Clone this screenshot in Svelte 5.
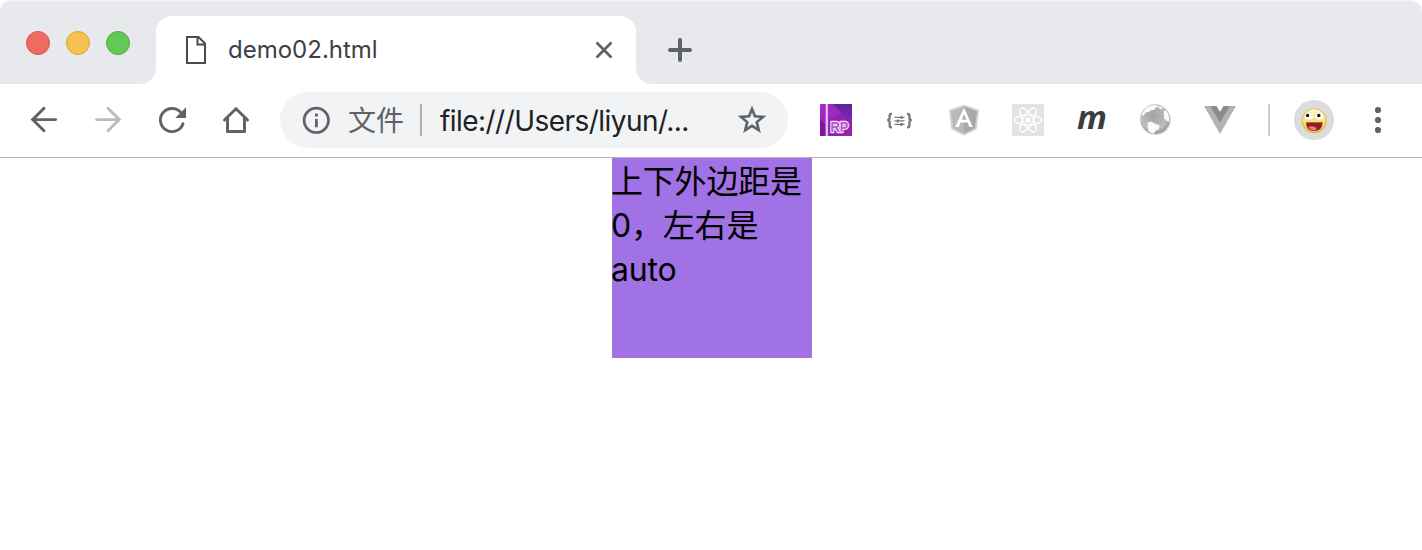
<script>
  const petals = [0, 60, 120];
  const dots = [10, 20, 30];
</script>

<div class="window">
  <header class="strip">
    <div class="lights">
      <i class="red"></i><i class="yellow"></i><i class="green"></i>
    </div>
    <div class="tab">
      <svg class="doc" width="20" height="28" viewBox="0 0 20 28" fill="none" stroke="#4a4a4a" stroke-width="2">
        <path d="M1 1h11.5L19 7.5V27H1z" /><path d="M11.5 1v7.5H19" />
      </svg>
      <span class="title">demo02.html</span>
      <svg width="20" height="20" viewBox="0 0 20 20" stroke="#5f6368" stroke-width="2.7" stroke-linecap="round">
        <path d="M3.3 3.3l13.4 13.4M16.7 3.3L3.3 16.7" />
      </svg>
    </div>
    <svg class="plus" width="24" height="24" viewBox="0 0 24 24" stroke="#5f6368" stroke-width="4" stroke-linecap="round">
      <path d="M2 12h20M12 2v20" />
    </svg>
  </header>

  <div class="toolbar">
    <nav class="icons">
      <svg viewBox="0 0 40 40" fill="none" stroke="#5f6368" stroke-width="2.9" stroke-linecap="round">
        <path d="M31.6 19.6H8.8M20 8.3L8.6 19.6 20 30.8" />
      </svg>
      <svg viewBox="0 0 40 40" fill="none" stroke="#babcbe" stroke-width="2.9" stroke-linecap="round">
        <path d="M8.4 19.6h22.8M20 8.3l11.4 11.3L20 30.8" />
      </svg>
      <svg viewBox="0 0 40 40" fill="none" stroke="#5f6368" stroke-width="2.9" stroke-linecap="round">
        <path d="M31 23.7A11.6 11.6 0 1 1 28.2 11.8" />
        <path d="M34 7.2V18H23.2z" fill="#5f6368" stroke="none" />
      </svg>
      <svg viewBox="0 0 40 40" fill="none" stroke="#5f6368" stroke-width="3" stroke-linecap="round" stroke-linejoin="round">
        <path d="M8.5 20L20 8.7 31.5 20" /><path d="M11.5 18.5v13h17v-13" />
      </svg>
    </nav>

    <div class="address">
      <svg width="28" height="28" viewBox="0 0 28 28" fill="none" stroke="#5f6368">
        <circle cx="14.3" cy="14.3" r="12.2" stroke-width="2.7" />
        <path d="M14.4 12.9v8.3M14.4 7.4v3" stroke-width="2.8" />
      </svg>
      <span class="scheme">文件</span>
      <i class="sep"></i>
      <span class="url">file:///Users/liyun/...</span>
      <svg class="star" width="32" height="32" viewBox="0 0 32 32" fill="none" stroke="#5f6368" stroke-width="2.6">
        <path d="M16 5L18.9 12.3 27 12.9 20.8 18.1 22.8 26.1 16 21.8 9.2 26.1 11.2 18.1 5 12.9 13.1 12.3z" />
      </svg>
    </div>

    <div class="icons extensions">
      <svg viewBox="0 0 40 40">
        <defs>
          <linearGradient id="rp" x1="0" y1="0" x2="1" y2="1">
            <stop offset="0" stop-color="#a629c1" /><stop offset=".45" stop-color="#962abf" /><stop offset="1" stop-color="#92179f" />
          </linearGradient>
          <linearGradient id="fold" x1="0" y1="0" x2="0" y2="1">
            <stop offset="0" stop-color="#5c239c" /><stop offset="1" stop-color="#862ab9" />
          </linearGradient>
        </defs>
        <rect x="4" y="4" width="32" height="32" rx="1" fill="url(#rp)" />
        <path d="M17 4h19v21L26 14z" fill="url(#fold)" />
        <path d="M13 19L26 14l10 11v11H13z" fill="#9420ae" />
        <path d="M4 18l5 7v11H4z" fill="#851399" />
        <path d="M10.8 4v32" stroke="#e7c4ef" stroke-width="2.2" />
        <text x="14.5" y="32.2" font-family="Liberation Sans" font-size="14" font-weight="700" textLength="18" lengthAdjust="spacingAndGlyphs" fill="#b45ac6" stroke="#f4e0f8" stroke-width="2.4" stroke-linejoin="round" paint-order="stroke">RP</text>
      </svg>
      <svg viewBox="0 0 40 40" fill="none" stroke="#777">
        <path d="M12 13.9h-.8q-1.6 0-1.6 1.7v2.2q0 2.1-2.3 2.3 2.3.2 2.3 2.3v3.2q0 1.7 1.6 1.7h.8M27 13.9h.8q1.6 0 1.6 1.7v2.2q0 2.1 2.3 2.3-2.3.2-2.3 2.3v3.2q0 1.7-1.6 1.7H27" stroke-width="2.3" />
        <path d="M14.5 17.4h10M14.5 20.9h10M14.5 24.4h10" stroke-width="1.4" />
        <path d="M21.5 15.9v3M17.8 19.4v3M21.5 22.9v3" stroke-width="1.8" />
      </svg>
      <svg viewBox="0 0 40 40">
        <path d="M20 4.8l15 5.2-2.4 19.2L20 35.5 7.4 29.2 5 10z" fill="#d0d0d0" />
        <path d="M20 6.7l12.9 4.5-2.1 16.9L20 33.4 9.2 28.1 7.1 11.2z" fill="#b9b9b9" />
        <path d="M20 6.7l12.9 4.5-2.1 16.9L20 33.4z" fill="#a9a9a9" />
        <path d="M20 7.7l8.8 19.2h-3.5l-1.8-4.3h-7l-1.8 4.3h-3.5zM20 14l-2.4 5.8h4.8z" fill="#fff" fill-rule="evenodd" />
      </svg>
      <svg viewBox="0 0 40 40">
        <rect x="4" y="4" width="32" height="32" rx="2" fill="#e2e2e2" />
        <g fill="none" stroke="#fff" stroke-width="1.4">
          {#each petals as angle}
            <ellipse cx="20" cy="20" rx="13.5" ry="5.1" transform={`rotate(${angle} 20 20)`} />
          {/each}
        </g>
        <circle cx="20" cy="20" r="2.8" fill="#fff" />
      </svg>
      <span class="letter">m</span>
      <svg viewBox="0 0 40 40">
        <defs>
          <radialGradient id="sea" cx=".45" cy=".4" r=".6">
            <stop offset="0" stop-color="#a2a2a2" /><stop offset=".75" stop-color="#bebebe" /><stop offset="1" stop-color="#999" />
          </radialGradient>
          <clipPath id="ball"><circle cx="19" cy="19.2" r="14.2" /></clipPath>
        </defs>
        <circle cx="20.2" cy="20.4" r="14.7" fill="#ddd" />
        <circle cx="19" cy="19.2" r="14.9" fill="url(#sea)" />
        <g clip-path="url(#ball)" fill="#fbfbfb">
          <path d="M7 12l3-5 5-3 6 1 1 2-3 1-1 2-3 0-2 2-3 0-2 3-3 1z" />
          <path d="M22 6l5 1-1 2-3-1z" />
          <path d="M28 11l4-1 3 7-1 5-3-1-3-3z" />
          <path d="M11.5 22.5l4-1 3 2 5 2-.5 3.6-4 2-1 3.5-5.2-3-1-4z" />
        </g>
      </svg>
      <svg viewBox="0 0 40 40">
        <path d="M4 6h12.4L20 12l3.6-6H36L20 34z" fill="#b3b3b3" />
        <path d="M10.2 6h6.2L20 12l3.6-6h6.2L20 22.8z" fill="#8c8c8c" />
      </svg>
    </div>

    <i class="divider"></i>

    <svg class="avatar" width="40" height="40" viewBox="0 0 40 40">
      <defs>
        <linearGradient id="skin" x1="0" y1="0" x2="0" y2="1">
          <stop offset="0" stop-color="#fff8d5" /><stop offset=".5" stop-color="#fbe27f" /><stop offset="1" stop-color="#ecbd47" />
        </linearGradient>
      </defs>
      <circle cx="20" cy="20" r="20" fill="#dcdcdc" />
      <circle cx="20.2" cy="20.8" r="12.1" fill="url(#skin)" stroke="#dda642" stroke-width=".8" />
      <ellipse cx="15" cy="16.6" rx="4" ry="3" fill="#fff" />
      <ellipse cx="25.4" cy="16.6" rx="4" ry="3" fill="#fff" />
      <circle cx="13.6" cy="15.5" r="1.7" fill="#17130d" />
      <circle cx="24.8" cy="15.5" r="1.7" fill="#17130d" />
      <path d="M12.4 22.7h15.8q0 7.8-7.9 7.8t-7.9-7.8z" fill="#991b20" stroke="#6d2416" stroke-width=".6" />
      <path d="M14.3 27.6q3-2.7 7.5-.1l1 2.1q-5 1.8-8.5-2z" fill="#e77a85" />
    </svg>

    <svg class="menu" width="8" height="40" viewBox="0 0 8 40" fill="#5f6368">
      {#each dots as y}<circle cx="4" cy={y} r="3.1" />{/each}
    </svg>
  </div>

  <main><div class="box"><p>上下外边距是0，左右是auto</p></div></main>
</div>

<style>
  :global(body) { background: #fff; }
  .window { width: 1422px; height: 550px; overflow: hidden; font-family: Inter, "Noto Sans CJK SC", sans-serif; }
  .strip { display: flex; box-sizing: border-box; height: 84px; padding: 16px 0 0 26px; background: #e8e9ed; border-radius: 12px 12px 0 0; box-shadow: inset 0 1px #f3f4f5; }
  .lights { display: flex; gap: 16px; width: 130px; padding-top: 15px; }
  .lights i { box-sizing: border-box; width: 24px; height: 24px; border-radius: 50%; border: 1px solid; }
  .lights .red { background: #ed6b5f; border-color: #d9534a; }
  .lights .yellow { background: #f6c150; border-color: #d9a340; }
  .lights .green { background: #63c956; border-color: #4fa93f; }
  .tab { position: relative; display: flex; align-items: center; box-sizing: border-box; width: 480px; height: 68px; padding: 0 22px 0 30px; border-radius: 16px 16px 0 0; background: #fff; }
  .tab::before, .tab::after { content: ""; position: absolute; bottom: 0; width: 16px; height: 16px; }
  .tab::before { left: -16px; background: radial-gradient(circle at 0 0, transparent 15.5px, #fff 16.5px); }
  .tab::after { right: -16px; background: radial-gradient(circle at 100% 0, transparent 15.5px, #fff 16.5px); }
  .title { flex: 1; margin-left: 22px; font-size: 24px; line-height: 32px; color: #3c4043; }
  .plus { margin: 22px 0 0 32px; }
  .toolbar { display: flex; align-items: center; box-sizing: border-box; height: 74px; padding: 0 0 1px 24px; border-bottom: 1px solid #b3b3b5; }
  .icons { display: flex; gap: 24px; }
  .icons svg { width: 40px; height: 40px; flex: none; }
  .toolbar svg { display: block; flex: none; }
  .address { display: flex; align-items: center; box-sizing: border-box; width: 508px; height: 56px; margin-left: 24px; padding: 0 20px 0 22px; border-radius: 28px; background: #f1f3f4; }
  .scheme { margin-left: 18px; padding-bottom: 2px; font: 28px/40px "Noto Sans CJK SC", sans-serif; color: #5f6368; }
  .sep { width: 2px; height: 32px; margin-left: 16px; background: #aeb0b3; }
  .url { flex: 1; margin-left: 18px; padding-top: 1px; font-size: 28px; line-height: 40px; letter-spacing: -0.55px; white-space: nowrap; color: #202124; }
  .extensions { margin-left: 28px; }
  .letter { width: 40px; height: 40px; font: italic 700 33px/34px "Open Sans", sans-serif; text-align: center; color: #3d3d3d; }
  .divider { width: 2px; height: 32px; margin-left: 28px; background: #ccc; }
  .avatar { margin-left: 24px; }
  .menu { margin-left: 40px; }
  .box { box-sizing: border-box; width: 200px; height: 200px; margin: 0 0 0 612px; padding-top: 2px; background: #a172e5; color: #000; font-size: 32px; font-weight: 380; line-height: 44px; letter-spacing: -0.2px; }
  .box p { margin: 0 0 0 -1px; }
</style>
